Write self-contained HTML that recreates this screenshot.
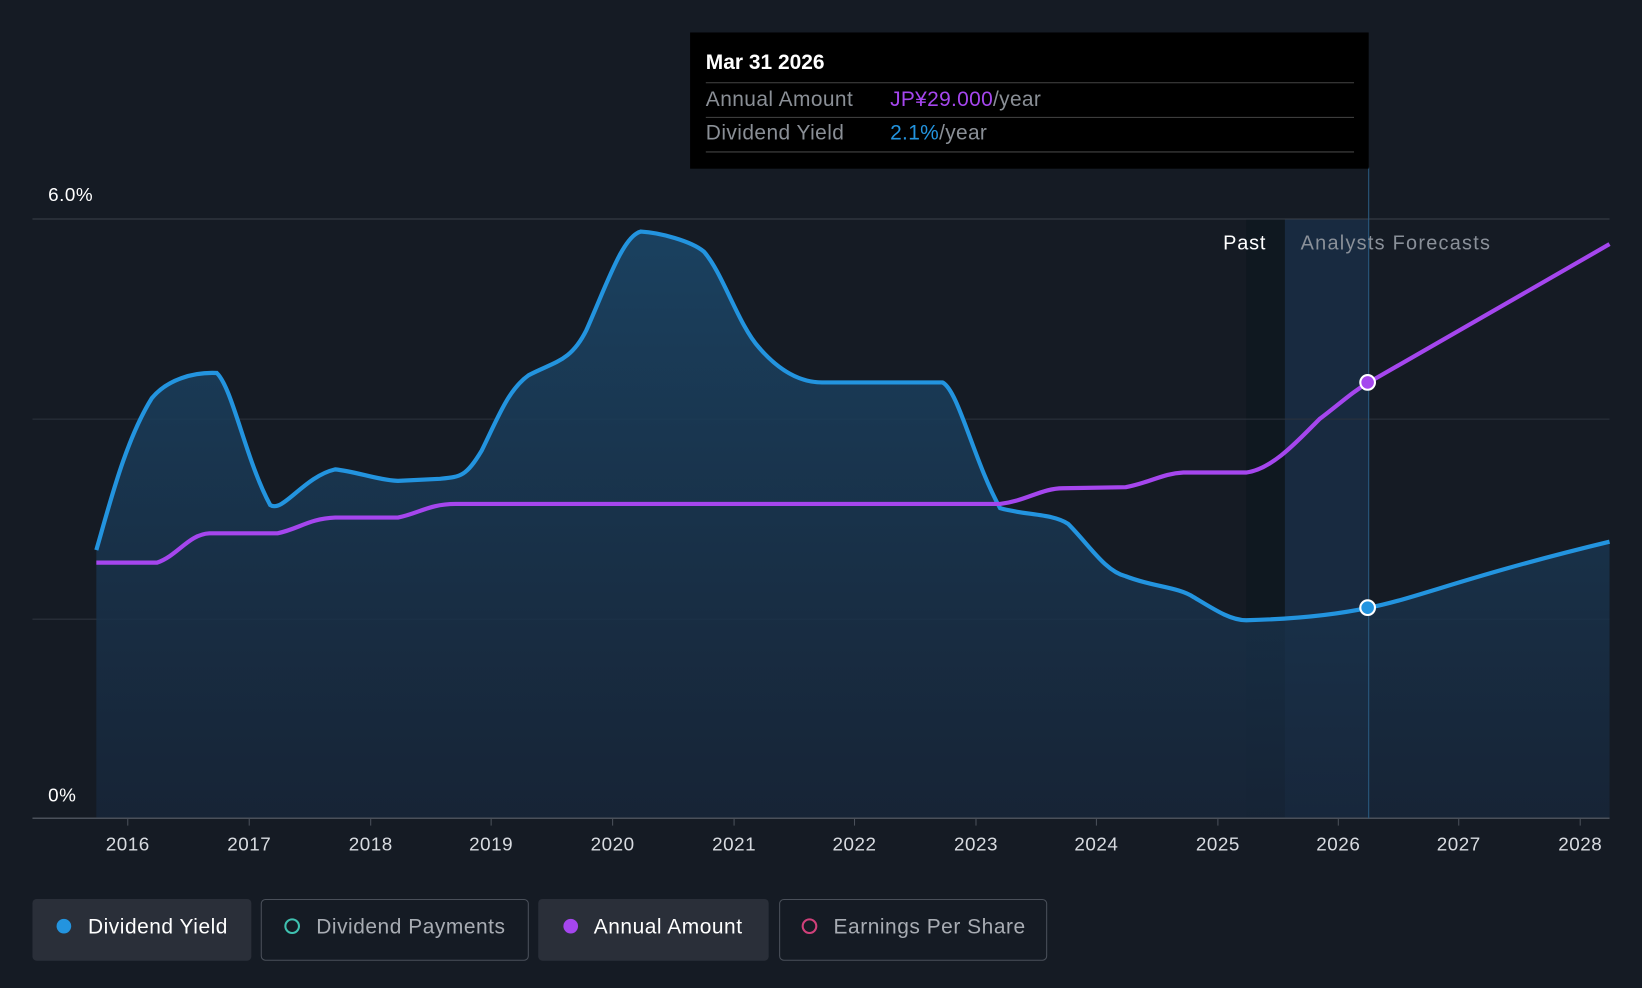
<!DOCTYPE html>
<html><head><meta charset="utf-8"><style>
html,body{margin:0;padding:0;background:#151b24;}
svg{display:block;font-family:"Liberation Sans",Arial,sans-serif;}
</style></head><body>
<svg width="1642" height="988" viewBox="0 0 1568 943" preserveAspectRatio="none">
<defs>
<linearGradient id="g" x1="0" y1="0" x2="0" y2="1">
<stop offset="0" stop-color="#1b4566" stop-opacity="0.9"/>
<stop offset="1" stop-color="#17263a" stop-opacity="0.8"/>
</linearGradient>
</defs>
<rect width="1568" height="943" fill="#151b24"/>
<rect x="1190" y="209" width="117" height="572" fill="#0f1820"/>
<rect x="1227" y="209" width="80" height="572" fill="#1a3048" opacity="0.8"/>
<line x1="31" y1="209" x2="1537" y2="209" stroke="#3a404a" stroke-width="1"/>
<line x1="31" y1="400" x2="1537" y2="400" stroke="#2c333d" stroke-width="1"/>
<line x1="31" y1="591" x2="1537" y2="591" stroke="#2c333d" stroke-width="1"/>
<path d="M92,525 C105,480 120,420 145,380 C160,362 185,355 207,356 C222,370 235,440 258,482 C270,490 290,455 320,448 C340,450 360,458 380,459 L420,457 C440,455 445,455 460,430 C475,400 485,372 505,358 C530,345 545,345 560,315 C580,270 595,225 612,221 C630,222 660,230 672,240 C690,260 705,310 725,332 C745,355 765,365 785,365 L900,365 C915,372 930,440 955,485 C980,492 1005,490 1020,500 C1040,520 1055,545 1075,550 C1100,560 1125,560 1140,570 C1160,582 1175,592 1190,592 C1230,591 1270,588 1307,580 C1350,572 1400,550 1537,517 L1537,781 L92,781 Z" fill="url(#g)"/>
<path d="M92,525 C105,480 120,420 145,380 C160,362 185,355 207,356 C222,370 235,440 258,482 C270,490 290,455 320,448 C340,450 360,458 380,459 L420,457 C440,455 445,455 460,430 C475,400 485,372 505,358 C530,345 545,345 560,315 C580,270 595,225 612,221 C630,222 660,230 672,240 C690,260 705,310 725,332 C745,355 765,365 785,365 L900,365 C915,372 930,440 955,485 C980,492 1005,490 1020,500 C1040,520 1055,545 1075,550 C1100,560 1125,560 1140,570 C1160,582 1175,592 1190,592 C1230,591 1270,588 1307,580 C1350,572 1400,550 1537,517" fill="none" stroke="#2394df" stroke-width="4"/>
<path d="M92,537 L150,537 C170,530 180,510 200,509 L265,509 C285,505 295,495 320,494 L380,494 C400,490 410,481 435,481 L955,481 C980,478 995,466 1015,466 L1075,465 C1100,460 1110,452 1130,451 L1190,451 C1215,448 1240,420 1260,400 C1280,385 1290,375 1307,365 L1537,233" fill="none" stroke="#a546ee" stroke-width="4"/>
<line x1="31" y1="781" x2="1537" y2="781" stroke="#4a505a" stroke-width="1.5"/>
<line x1="1307" y1="160" x2="1307" y2="781" stroke="#2a5a80" stroke-width="1"/>
<circle cx="1306" cy="365" r="7" fill="#a546ee" stroke="#fff" stroke-width="2"/>
<circle cx="1306" cy="580" r="7" fill="#2394df" stroke="#fff" stroke-width="2"/>
<g fill="#fff" font-size="18" letter-spacing="0.5">
<text x="46" y="192">6.0%</text>
<text x="46" y="765">0%</text>
</g>
<text x="1168" y="238" fill="#fff" font-size="19" letter-spacing="0.8">Past</text>
<text x="1242" y="238" fill="#8a9099" font-size="19" letter-spacing="1.2">Analysts Forecasts</text>
<g fill="#d8dbe0" font-size="18" text-anchor="middle" letter-spacing="0.5">
<text x="122" y="812">2016</text><text x="238" y="812">2017</text><text x="354" y="812">2018</text>
<text x="469" y="812">2019</text><text x="585" y="812">2020</text><text x="701" y="812">2021</text>
<text x="816" y="812">2022</text><text x="932" y="812">2023</text><text x="1047" y="812">2024</text>
<text x="1163" y="812">2025</text><text x="1278" y="812">2026</text><text x="1393" y="812">2027</text>
<text x="1509" y="812">2028</text>
</g>
<g stroke="#4a505a"><line x1="122" y1="781" x2="122" y2="788"/><line x1="238" y1="781" x2="238" y2="788"/><line x1="354" y1="781" x2="354" y2="788"/><line x1="469" y1="781" x2="469" y2="788"/><line x1="585" y1="781" x2="585" y2="788"/><line x1="701" y1="781" x2="701" y2="788"/><line x1="816" y1="781" x2="816" y2="788"/><line x1="932" y1="781" x2="932" y2="788"/><line x1="1047" y1="781" x2="1047" y2="788"/><line x1="1163" y1="781" x2="1163" y2="788"/><line x1="1278" y1="781" x2="1278" y2="788"/><line x1="1393" y1="781" x2="1393" y2="788"/><line x1="1509" y1="781" x2="1509" y2="788"/></g>
<rect x="659" y="31" width="648" height="130" fill="#000"/>
<text x="674" y="66" fill="#fff" font-size="20" font-weight="bold">Mar 31 2026</text>
<line x1="674" y1="79" x2="1293" y2="79" stroke="#444"/>
<text x="674" y="101" fill="#8a8f96" font-size="20" letter-spacing="0.4">Annual Amount</text>
<text x="850" y="101" font-size="20" letter-spacing="0.3"><tspan fill="#a546ee">JP¥29.000</tspan><tspan fill="#8a8f96">/year</tspan></text>
<line x1="674" y1="112" x2="1293" y2="112" stroke="#444"/>
<text x="674" y="133" fill="#8a8f96" font-size="20" letter-spacing="0.4">Dividend Yield</text>
<text x="850" y="133" font-size="20" letter-spacing="0.3"><tspan fill="#2394df">2.1%</tspan><tspan fill="#8a8f96">/year</tspan></text>
<line x1="674" y1="145" x2="1293" y2="145" stroke="#444"/>
<rect x="31" y="858" width="209" height="59" rx="4" fill="#2a2f39"/>
<circle cx="61" cy="884" r="7" fill="#2394df"/>
<text x="84" y="891" fill="#fff" font-size="20" letter-spacing="0.5">Dividend Yield</text>
<rect x="249.5" y="858.5" width="255" height="58" rx="4" fill="none" stroke="#4a505a"/>
<circle cx="279" cy="884" r="6.5" fill="none" stroke="#3fc1b0" stroke-width="2"/>
<text x="302" y="891" fill="#a8acb3" font-size="20" letter-spacing="0.5">Dividend Payments</text>
<rect x="514" y="858" width="220" height="59" rx="4" fill="#2a2f39"/>
<circle cx="545" cy="884" r="7" fill="#a546ee"/>
<text x="567" y="891" fill="#fff" font-size="20" letter-spacing="0.5">Annual Amount</text>
<rect x="744.5" y="858.5" width="255" height="58" rx="4" fill="none" stroke="#4a505a"/>
<circle cx="773" cy="884" r="6.5" fill="none" stroke="#d0407a" stroke-width="2"/>
<text x="796" y="891" fill="#a8acb3" font-size="20" letter-spacing="0.5">Earnings Per Share</text>
</svg>
</body></html>
